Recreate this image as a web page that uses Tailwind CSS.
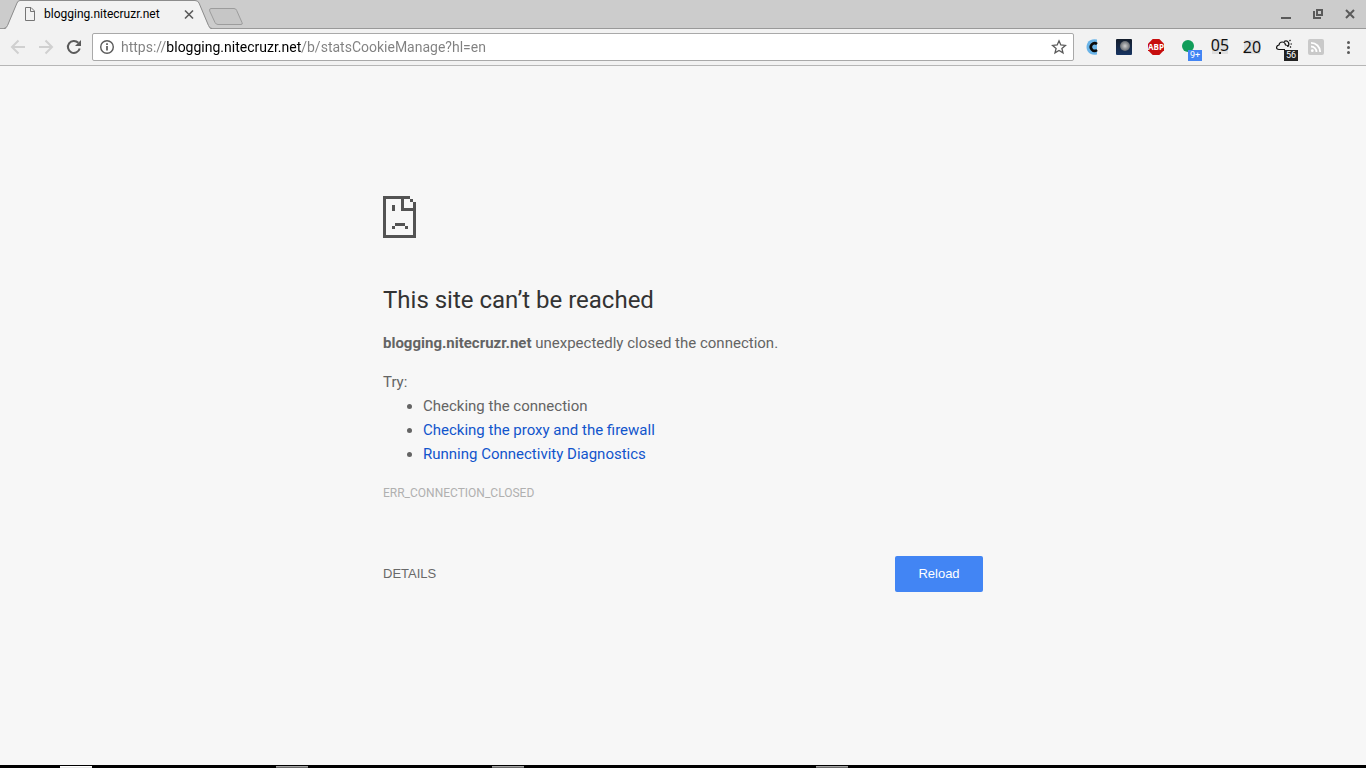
<!DOCTYPE html>
<html lang="en">
<head>
  <meta charset="UTF-8" />
  <meta name="viewport" content="width=device-width, initial-scale=1" />
  <title>blogging.nitecruzr.net</title>
  <script src="https://cdn.jsdelivr.net/npm/@tailwindcss/browser@4"></script>
</head>
<body class="bg-[#f7f7f7] font-[Roboto,sans-serif] text-[#646464]">
  <div class="flex flex-col min-h-screen">
    <!-- Tab strip -->
    <header class="relative flex items-center h-[29px] bg-[#cccccc] border-b border-[#999999]">
      <div class="relative flex items-center w-[212px] h-[29px] shrink-0 pl-6 pr-[17px]">
        <svg class="absolute left-0 top-0 w-[212px] h-[29px]" viewBox="0 0 212 29">
          <path d="M5 29 C7 28 7 27 8 25 L17 3 Q18 .5 20 .5 H195 Q198 .5 199 3 L208 25 Q209 28 211 29 Z" fill="#f2f2f2" />
          <path d="M4 28.500 Q6.500 28 7.500 25.500 L17 3 Q18 .5 20 .5 H195 Q198 .5 199 3 L208.500 25.500 Q209.500 28.500 212 28.500" fill="none" stroke="#8c8c8c" />
        </svg>
        <svg class="relative w-3 h-4 shrink-0" viewBox="0 0 12 16" fill="none" stroke="#757575">
          <path d="M1.500 1.500 H7 L10.500 5 V14.500 H1.500 Z M6.500 1.500 V5.500 H10.500" />
        </svg>
        <span class="relative flex-1 pl-2 text-xs text-black whitespace-nowrap">blogging.nitecruzr.net</span>
        <button aria-label="Close tab" class="relative w-3 h-3">
          <svg class="w-3 h-3" viewBox="0 0 12 12" stroke="#5a5a5a" stroke-width="1.600"><path d="M2 2.500 L10 10.500 M10 2.500 L2 10.500" /></svg>
        </button>
      </div>
      <button aria-label="New tab" class="-ml-1 mt-1 w-9 h-5">
        <svg class="w-9 h-5" viewBox="0 0 36 20">
          <path d="M3 2.500 H26 Q28 2.500 28.700 4.500 L34 16.500 Q35 18.500 33 18.500 H10 Q8 18.500 7 16.500 L1.700 5 Q1 2.500 3 2.500 Z" fill="#c6c6c6" stroke="#9c9c9c" />
        </svg>
      </button>
      <!-- Window controls -->
      <div class="flex gap-4 ml-auto pr-2">
        <button aria-label="Minimize" class="w-4 h-4">
          <svg class="w-4 h-4" viewBox="0 0 16 16" fill="#5a5a5a"><path d="M3 11 H13 V13 H3 Z" /></svg>
        </button>
        <button aria-label="Restore" class="w-4 h-4">
          <svg class="w-4 h-4" viewBox="0 0 16 16" fill="none" stroke="#5a5a5a" stroke-width="2"><path d="M7 4 H12 V9 H7 Z" /><path d="M4 5 V12 H11" /></svg>
        </button>
        <button aria-label="Close" class="w-4 h-4">
          <svg class="w-4 h-4" viewBox="0 0 16 16" stroke="#5a5a5a" stroke-width="2"><path d="M4 4 L12 12 M12 4 L4 12" /></svg>
        </button>
      </div>
    </header>

    <!-- Toolbar -->
    <nav class="flex items-center h-[37px] pl-2.5 pr-2.5 bg-[#f2f2f2] border-b border-[#b6b6b6]">
      <div class="flex gap-3 mr-2.5">
        <button aria-label="Back" class="w-4 h-4" disabled>
          <svg class="w-4 h-4" viewBox="0 0 16 16" fill="none" stroke="#d0d0d0" stroke-width="2"><path d="M15 8 H2.500 M8.500 1.500 L2 8 L8.500 14.500" /></svg>
        </button>
        <button aria-label="Forward" class="w-4 h-4" disabled>
          <svg class="w-4 h-4" viewBox="0 0 16 16" fill="none" stroke="#d0d0d0" stroke-width="2"><path d="M1 8 H13.500 M7.500 1.500 L14 8 L7.500 14.500" /></svg>
        </button>
        <button aria-label="Reload page" class="w-4 h-4">
          <svg class="w-4 h-4" viewBox="0 0 16 16" fill="none" stroke="#5a5a5a" stroke-width="2"><path d="M13.700 9.500 A6 6 0 1 1 12.300 3.800" /><path d="M15 1 V7 H9 Z" fill="#5a5a5a" stroke="none" /></svg>
        </button>
      </div>
      <div class="flex flex-1 items-center h-7 px-1.5 bg-white border border-[#a9a9a9] rounded-xs">
        <svg class="w-4 h-4 shrink-0" viewBox="0 0 16 16" fill="none" stroke="#5a5a5a"><circle cx="8" cy="8" r="6.300" stroke-width="1.400" /><path d="M8 7 V11.500 M8 4.300 V6" stroke-width="1.700" /></svg>
        <input type="text" aria-label="Address" value="https://blogging.nitecruzr.net/b/statsCookieManage?hl=en" class="flex-1 min-w-0 ml-1.5 h-6 text-sm text-transparent bg-clip-text bg-[linear-gradient(90deg,#808080_45px,#000_45px,#000_181px,#808080_181px)] outline-none" />
        <button aria-label="Bookmark this page" class="w-4 h-4">
          <svg class="w-4 h-4" viewBox="0 0 16 16" fill="none" stroke="#5a5a5a" stroke-width="1.300"><path d="M8 1.800 L9.800 6 L14.400 6.400 L10.900 9.400 L12 13.900 L8 11.500 L4 13.900 L5.100 9.400 L1.600 6.400 L6.200 6 Z" /></svg>
        </button>
      </div>
      <!-- Extensions -->
      <div class="flex gap-4 ml-2.5">
        <button aria-label="Cookies" class="w-4 h-4">
          <svg class="w-4 h-4" viewBox="0 0 16 16" fill="none"><path d="M13 0.500 Q6 -.5 3.500 4 Q1.500 8 3.500 12 Q6 16.500 13 15.500 Z" fill="#6ab4e8" /><path d="M13 5 A3.800 3.800 0 1 0 13 11" stroke="#0a0a0a" stroke-width="2.600" /></svg>
        </button>
        <button aria-label="Moon phase" class="w-4 h-4">
          <svg class="w-4 h-4" viewBox="0 0 16 16">
            <defs>
              <linearGradient id="sky" x2="0" y2="1"><stop stop-color="#141d2b" /><stop offset="1" stop-color="#173462" /></linearGradient>
              <radialGradient id="moon"><stop stop-color="#cfcfcf" /><stop offset="1" stop-color="#666a70" /></radialGradient>
            </defs>
            <rect width="16" height="16" rx="1" fill="url(#sky)" /><circle cx="9" cy="7" r="5" fill="url(#moon)" />
          </svg>
        </button>
        <button aria-label="Adblock Plus" class="w-4 h-4">
          <svg class="w-4 h-4" viewBox="0 0 16 16"><path d="M4.700 0 H11.300 L16 4.700 V11.300 L11.300 16 H4.700 L0 11.300 V4.700 Z" fill="#c70d0d" /><text x="8" y="11" text-anchor="middle" font-family="Open Sans" font-weight="700" font-size="8" fill="#fff">ABP</text></svg>
        </button>
        <button aria-label="Notifications" class="relative w-4 h-4">
          <svg class="w-4 h-4" viewBox="0 0 16 16"><circle cx="8" cy="7" r="6" fill="#109d59" /></svg>
          <span class="absolute left-2 top-[11px] w-3.5 h-[11px] bg-[#4285f4] text-white text-[9px] leading-[11px] text-center">9+</span>
        </button>
        <button aria-label="Clock" class="relative w-4 h-4">
          <svg class="w-4 h-4 overflow-visible" viewBox="0 0 16 16"><rect width="16" height="15" fill="#dedede" /><text x="8" y="12" text-anchor="middle" font-family="Noto Sans" font-size="16" fill="#111">05</text><path d="M7 13 H9 V15 H7 Z" fill="#111" /></svg>
        </button>
        <button aria-label="Calendar" class="w-4 h-4">
          <svg class="w-4 h-4 overflow-visible" viewBox="0 0 16 16"><rect y="1" width="16" height="14" fill="#dedede" /><text x="8" y="14" text-anchor="middle" font-family="Noto Sans" font-size="16" fill="#111">20</text></svg>
        </button>
        <button aria-label="Weather" class="relative w-4 h-4">
          <svg class="w-4 h-4" viewBox="0 0 16 16" fill="none" stroke="#111" stroke-width="1.200"><path d="M9 10.500 H3 C-.5 10.500 0 6.500 3 6 C3.500 2 9 2 9.500 6 C11.500 6 12 7 12 8" /><path d="M8 2.500 Q11 1 12.500 3.500 Q13.500 6 12 7 M13.500 2 L14.500 1 M14.500 5 H16 M14 7.500 L15 8.500" /></svg>
          <span class="absolute left-2 top-[11px] w-3.5 h-[11px] bg-[#222222] text-white text-[9px] leading-[11px] text-center">56</span>
        </button>
        <button aria-label="Feeds" class="w-4 h-4">
          <svg class="w-4 h-4" viewBox="0 0 16 16" fill="none"><rect width="16" height="16" rx="2" fill="#c9c9c9" /><g stroke="#fff" stroke-width="1.800"><path d="M3 7.500 A5.500 5.500 0 0 1 8.500 13" /><path d="M3 3.800 A9.200 9.200 0 0 1 12.200 13" /></g><circle cx="4.300" cy="11.700" r="1.400" fill="#fff" /></svg>
        </button>
        <button aria-label="Menu" class="w-4 h-4">
          <svg class="w-4 h-4" viewBox="0 0 16 16" fill="#5a5a5a"><circle cx="8.500" cy="3.500" r="1.500" /><circle cx="8.500" cy="8.500" r="1.500" /><circle cx="8.500" cy="13.500" r="1.500" /></svg>
        </button>
      </div>
    </nav>

    <!-- Error page -->
    <main class="flex-1 w-full max-w-[600px] mx-auto pt-[130px] text-[15px] leading-6">
      <svg class="w-[33px] h-[42px]" viewBox="0 0 33 42" fill="#535353" shape-rendering="crispEdges">
        <path d="M0 0 H27 V3 H21 V12 H30 V6 H33 V42 H0 Z M3 3 V39 H30 V15 H18 V3 Z" fill-rule="evenodd" />
        <path d="M27 3 H30 V6 H27 Z M9 9 H12 V15 H9 Z M12 27 H22 V30 H12 Z M9 30 H12 V33 H9 Z M22 30 H25 V33 H22 Z" />
      </svg>
      <h1 class="mt-[47px] text-2xl leading-[30px] text-[#333333]">This site can’t be reached</h1>
      <p class="mt-4"><strong class="font-bold">blogging.nitecruzr.net</strong> unexpectedly closed the connection.</p>
      <p class="mt-[15px]">Try:</p>
      <ul class="list-disc pl-10">
        <li>Checking the connection</li>
        <li><a href="#proxy" class="text-[#1155cc]">Checking the proxy and the firewall</a></li>
        <li><a href="#diagnostics" class="text-[#1155cc]">Running Connectivity Diagnostics</a></li>
      </ul>
      <p class="mt-[15px] text-xs leading-6 text-[#b0b0b0]">ERR_CONNECTION_CLOSED</p>
      <div class="flex items-center justify-between mt-[51px] font-['Liberation_Sans',sans-serif] text-[13px]">
        <button class="h-9 text-[#696969]">DETAILS</button>
        <button class="w-22 h-9 rounded-xs bg-[#4285f4] text-white">Reload</button>
      </div>
    </main>

    <!-- Shelf edge -->
    <footer class="flex items-end h-[3px] pl-[60px] bg-black">
      <div class="w-8 h-0.5 bg-[#e8e8e8] border-t border-white"></div>
      <div class="w-8 h-0.5 ml-[184px] bg-[#6b6b6b] border-t border-[#a3a3a3]"></div>
      <div class="w-8 h-0.5 ml-[184px] bg-[#6b6b6b] border-t border-[#a3a3a3]"></div>
      <div class="w-8 h-0.5 ml-[292px] bg-[#6b6b6b] border-t border-[#a3a3a3]"></div>
    </footer>
  </div>
</body>
</html>
